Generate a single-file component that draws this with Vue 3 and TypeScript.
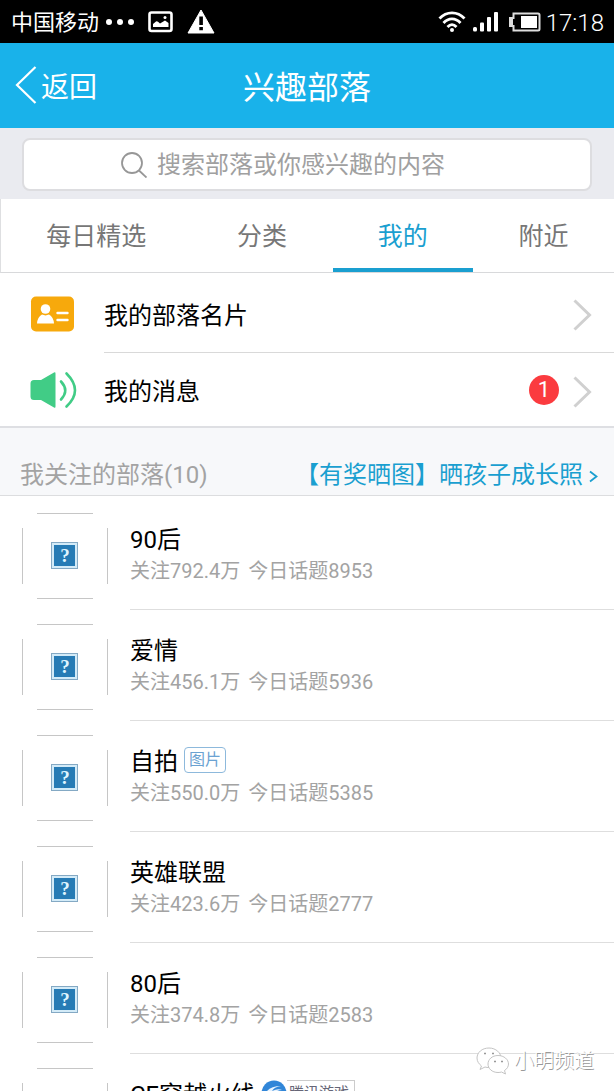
<script setup lang="ts">
import { ref } from 'vue'

interface Tribe {
  name: string
  followers: string
  topics: string
  tag?: string
  game?: string
}

const tabs: string[] = ['每日精选', '分类', '我的', '附近']
const activeTab = ref('我的')
const keyword = ref('')

const tribes: Tribe[] = [
  { name: '90后', followers: '792.4万', topics: '8953' },
  { name: '爱情', followers: '456.1万', topics: '5936' },
  { name: '自拍', followers: '550.0万', topics: '5385', tag: '图片' },
  { name: '英雄联盟', followers: '423.6万', topics: '2777' },
  { name: '80后', followers: '374.8万', topics: '2583' },
  { name: 'CF穿越火线', followers: '', topics: '', game: '腾讯游戏' },
]
</script>

<template>
  <div class="screen">
    <div class="status">
      <div class="status-left">
        <span class="carrier">中国移动</span>
        <svg class="dots" width="28" height="8" viewBox="0 0 28 8" fill="#fff" aria-hidden="true">
          <circle cx="3" cy="4" r="3" /><circle cx="14" cy="4" r="3" /><circle cx="25" cy="4" r="3" />
        </svg>
        <svg class="photo" width="25" height="22" viewBox="0 0 25 22" aria-hidden="true">
          <rect x="1.500" y="1.500" width="22" height="18.500" rx="2" fill="none" stroke="#fff" stroke-width="2.600" />
          <path d="M5 16v-3l3-2.500q1-.5 2 .3l2 1.700 5-3 3.500 2.500v4z" fill="#fff" />
          <circle cx="17" cy="6.500" r="1.500" fill="#fff" />
        </svg>
        <svg width="28" height="25" viewBox="0 0 28 25" aria-hidden="true">
          <path d="M14 1 27 24H1z" fill="#fff" stroke="#fff" stroke-linejoin="round" />
          <path d="M12.300 7.500h3.600v8.500h-3.600zM12.300 18h3.600v3.200h-3.600z" fill="#000" />
        </svg>
      </div>
      <div class="status-right">
        <svg width="28" height="22" viewBox="0 0 28 22" fill="none" stroke="#fff" stroke-width="2.800" aria-hidden="true">
          <path d="M1.500 7.500C8.500 0 19.500 0 26.500 7.500M5.500 12C10.500 6.500 17.500 6.500 22.500 12M9.500 16C12.500 12.800 15.500 12.800 18.500 16" />
          <circle cx="14" cy="19" r="2" fill="#fff" stroke="none" />
        </svg>
        <svg class="signal" width="26" height="20" viewBox="0 0 26 20" fill="#fff" aria-hidden="true">
          <rect x="0" y="15" width="4" height="4.500" rx="1.500" /><rect x="7" y="10.500" width="4" height="9" rx="1" />
          <rect x="14" y="5" width="4" height="14.500" rx="1" /><rect x="21" y="0" width="4" height="19.500" rx="1" />
        </svg>
        <svg class="battery" width="33" height="20" viewBox="0 0 33 20" aria-hidden="true">
          <path d="M5.500 1.500h24.500q1.500 0 1.500 1.500v14q0 1.500-1.500 1.500H5.500V14H2V6h3.500z" fill="#000" stroke="#ddd" stroke-width="2" />
          <rect x="1" y="6" width="4" height="8" fill="#ddd" />
          <rect x="13" y="4" width="16" height="12" fill="#fff" />
        </svg>
        <span class="clock">17:18</span>
      </div>
    </div>

    <header class="nav">
      <button class="back" type="button">
        <svg width="22" height="38" viewBox="0 0 22 38" fill="none" stroke="#fff" stroke-width="2.200" aria-hidden="true">
          <path d="M20.500 1 2 19l18.500 18" />
        </svg>
        <span>返回</span>
      </button>
      <h1>兴趣部落</h1>
    </header>

    <div class="search-bar">
      <label class="search">
        <svg width="26" height="26" viewBox="0 0 26 26" fill="none" stroke="#979797" stroke-width="1.800" aria-hidden="true">
          <circle cx="11" cy="11" r="10" /><path d="M18 18.500 25.500 25.500" />
        </svg>
        <input v-model="keyword" type="search" placeholder="搜索部落或你感兴趣的内容" aria-label="搜索部落或你感兴趣的内容" />
      </label>
    </div>

    <nav class="tabs">
      <button
        v-for="tab in tabs"
        :key="tab"
        type="button"
        :class="{ active: tab === activeTab }"
        @click="activeTab = tab"
      >{{ tab }}</button>
    </nav>

    <div class="menu">
      <a class="entry" href="#card">
        <span class="entry-icon">
          <svg width="44" height="36" viewBox="0 0 44 36" aria-hidden="true">
            <rect x="1" y="0.500" width="43" height="35" rx="5" fill="#f7a90c" />
            <circle cx="15.500" cy="13" r="4.800" fill="#fff" />
            <path d="M7 27.500q.5-6.500 5-9l3.500 1 3.500-1q4.500 2.500 5 9z" fill="#fff" />
            <path d="M27.500 17h10M27.500 24h10" stroke="#fff" stroke-width="2.400" stroke-linecap="round" />
          </svg>
        </span>
        <span class="entry-body line">
          <span class="entry-label">我的部落名片</span>
          <svg class="chevron" width="19" height="32" viewBox="0 0 19 32" fill="none" stroke="#d0d0d0" stroke-width="3" aria-hidden="true"><path d="M1.500 1.500 16.500 16 1.500 30.500" /></svg>
        </span>
      </a>
      <a class="entry" href="#messages">
        <span class="entry-icon">
          <svg width="47" height="38" viewBox="0 0 47 38" aria-hidden="true">
            <path d="M4 9h7L24 1.500q1.500-1 1.500 1v33q0 2-1.500 1L11 29H4q-3.500 0-3.500-3.500v-13Q.5 9 4 9z" fill="#41cc86" />
            <path d="M31 10.500q8.500 9 0 18M36.500 2.500q17 17 0 33" fill="none" stroke="#41cc86" stroke-width="2.600" stroke-linecap="round" />
          </svg>
        </span>
        <span class="entry-body">
          <span class="entry-label">我的消息</span>
          <span class="badge">1</span>
          <svg class="chevron" width="19" height="32" viewBox="0 0 19 32" fill="none" stroke="#d0d0d0" stroke-width="3" aria-hidden="true"><path d="M1.500 1.500 16.500 16 1.500 30.500" /></svg>
        </span>
      </a>
    </div>

    <div class="section-head">
      <h2>我关注的部落(10)</h2>
      <a href="#event">【有奖晒图】晒孩子成长照
        <svg width="9" height="13" viewBox="0 0 9 13" fill="none" stroke="#1a9fd0" stroke-width="1.800" aria-hidden="true"><path d="M1 1.500 7.500 6.500 1 11.500" /></svg>
      </a>
    </div>

    <ul class="tribes">
      <li v-for="tribe in tribes" :key="tribe.name" class="tribe">
        <svg class="thumb" width="86" height="86" viewBox="0 0 86 86" role="img" aria-label="部落头像">
          <path d="M15 .5h56M15 85.500h56M.5 15v56M85.500 15v56" fill="none" stroke="#c6c6c6" />
          <rect x="29.500" y="29.500" width="26" height="26" fill="#d3ebf8" stroke="#84a9c4" />
          <rect x="32" y="32" width="21" height="21" fill="#267bb5" />
          <text x="43" y="49" text-anchor="middle" class="unknown">?</text>
        </svg>
        <div class="tribe-body">
          <div class="title">
            <span>{{ tribe.name }}</span>
            <span v-if="tribe.tag" class="tag">{{ tribe.tag }}</span>
            <span v-if="tribe.game" class="game">
              <svg width="26" height="26" viewBox="0 0 26 26" aria-hidden="true">
                <circle cx="13" cy="13" r="12.500" fill="#3186d8" />
                <path d="M4 14q4-8 16-8-7 1-9 5 6-3 10-1-7 0-11 7z" fill="#e6f3ff" />
                <path d="M6 20q10 2 16-8" fill="none" stroke="#fff" stroke-width="2" />
              </svg>
              <span class="game-label">{{ tribe.game }}</span>
            </span>
          </div>
          <p v-if="tribe.followers"><span>关注{{ tribe.followers }}</span><span>今日话题{{ tribe.topics }}</span></p>
        </div>
      </li>
    </ul>

    <div class="watermark">
      <svg width="34" height="28" viewBox="0 0 34 28" fill="#fff" stroke="#c4c4c4" aria-hidden="true">
        <path d="M13 1C6 1 1 5.500 1 11c0 3.500 2 6 4.500 8L4 22.500l5-2.500q2 .6 4 .5C20 20.500 25 16 25 11S20 1 13 1z" />
        <path d="M22 8.500c-6 0-10 4-10 8.500s4 8.500 10 8.500q2 0 3.500-.5l4 2-1-3.500c2.500-1.500 4-4 4-6.500 0-4.500-4.500-8.500-10.500-8.500z" />
        <path d="M8 6.500h2M16 6.500h2M18 14.500h2M25 14.500h2" stroke="#999" stroke-width="1.500" />
      </svg>
      <span>小明频道</span>
    </div>
  </div>
</template>

<style>
body {
  margin: 0;
  background: #fff;
}
</style>

<style scoped>
* {
  box-sizing: border-box;
}

.screen {
  position: relative;
  display: flex;
  flex-direction: column;
  height: 100vh;
  overflow: hidden;
  background: #fff;
  color: #000;
  font-family: Roboto, "Noto Sans CJK SC", sans-serif;
  font-size: 24px;
}

.screen > * {
  flex: none;
}

button {
  padding: 0;
  border: 0;
  background: none;
  color: inherit;
  font: inherit;
}

a {
  color: inherit;
  text-decoration: none;
}

h1,
h2,
p,
ul {
  margin: 0;
  padding: 0;
  font-weight: 400;
}

.status,
.status-left,
.status-right {
  display: flex;
  align-items: center;
}

.status {
  justify-content: space-between;
  height: 43px;
  padding: 0 10px 0 11px;
  background: #000;
  color: #fff;
}

.carrier {
  padding-bottom: 3px;
  font-size: 22px;
}

.dots {
  margin: 0 14px 0 7px;
}

.photo {
  margin-right: 14px;
}

.signal {
  margin: 0 9px 0 7px;
}

.battery {
  margin-right: 5px;
}

.clock {
  padding-top: 3px;
  font-size: 24px;
  font-weight: 300;
  line-height: 40px;
}

.nav {
  display: grid;
  grid-template-columns: 1fr auto 1fr;
  align-items: center;
  height: 85px;
  padding: 0 15px 2px;
  background: #19b2ea;
  color: #fff;
}

.back {
  display: flex;
  align-items: center;
  gap: 4px;
  font-size: 28px;
}

.nav h1 {
  font-size: 32px;
}

.search-bar {
  padding: 10px 22px 8px;
  background: #eaebf0;
}

.search {
  display: flex;
  align-items: center;
  justify-content: center;
  gap: 10px;
  height: 53px;
  border: 2px solid #dddde0;
  border-radius: 8px;
  background: #fff;
}

.search input {
  width: 336px;
  padding: 0;
  border: 0;
  outline: 0;
  background: none;
  color: #333;
  font: inherit;
  appearance: none;
}

.search input::placeholder {
  color: #a0a0a0;
  opacity: 1;
}

.tabs {
  display: flex;
  height: 74px;
  border-bottom: 1px solid #d8d9db;
  border-left: 1px solid #dedfe1;
}

.tabs button {
  flex: 1 1 auto;
  border-bottom: 4px solid transparent;
  color: #777;
  font-size: 25px;
}

.tabs .active {
  border-color: #1a9fd0;
  color: #1a9fd0;
}

.menu {
  padding-top: 1px;
  border-bottom: 2px solid #dedfe3;
}

.entry {
  display: flex;
  height: 73px;
}

.entry:first-child {
  height: 79px;
}

.entry-icon {
  display: flex;
  align-items: center;
  width: 104px;
  padding-left: 30px;
}

.entry-body {
  display: flex;
  flex: 1;
  align-items: center;
  padding-right: 22px;
}

.line {
  border-bottom: 1px solid #d9d9d9;
}

.entry-label {
  flex: 1;
}

.badge {
  width: 30px;
  border-radius: 50%;
  background: #fb3b3f;
  color: #fff;
  font-size: 22px;
  line-height: 30px;
  text-align: center;
}

.chevron {
  margin: 4px 0 0 14px;
}

.section-head {
  display: flex;
  align-items: flex-end;
  justify-content: space-between;
  height: 68px;
  padding: 0 16px 2px 20px;
  border-bottom: 1px solid #dcdddf;
  background: #f7f8fa;
  line-height: 36px;
}

.section-head h2 {
  color: #a3a3a3;
  font-size: 24px;
}

.section-head a {
  color: #1a9fd0;
}

.tribes {
  padding-top: 3px;
  list-style: none;
}

.tribe {
  display: flex;
  gap: 22px;
  height: 111px;
  padding-left: 22px;
}

.thumb {
  margin-top: 14px;
}

.unknown {
  fill: #dff4ff;
  font-family: "Liberation Serif", serif;
  font-size: 19px;
  font-weight: 700;
}

.tribe-body {
  flex: 1;
  padding-top: 20px;
  border-bottom: 1px solid #dedede;
}

.title {
  display: flex;
  align-items: center;
  gap: 6px;
  height: 36px;
}

.tribe p {
  display: flex;
  gap: 8px;
  padding-top: 2px;
  color: #a3a3a3;
  font-size: 20px;
  line-height: 28px;
}

.tag {
  margin-top: 2px;
  padding: 0 4px;
  border: 1px solid #8db9dc;
  border-radius: 4px;
  color: #6ba2d2;
  font-size: 16px;
  line-height: 24px;
}

.game {
  display: flex;
  align-items: center;
  padding-top: 2px;
}

.game-label {
  padding: 0 5px 0 2px;
  border: 1px solid #ccc;
  border-left: 0;
  color: #667;
  font-size: 15px;
  line-height: 24px;
}

.watermark {
  position: absolute;
  right: 20px;
  bottom: 16px;
  display: flex;
  align-items: center;
  gap: 4px;
  color: #fff;
  font-size: 20px;
  font-weight: 300;
  line-height: 28px;
  text-shadow: 1px 1px 0 #999;
}
</style>
